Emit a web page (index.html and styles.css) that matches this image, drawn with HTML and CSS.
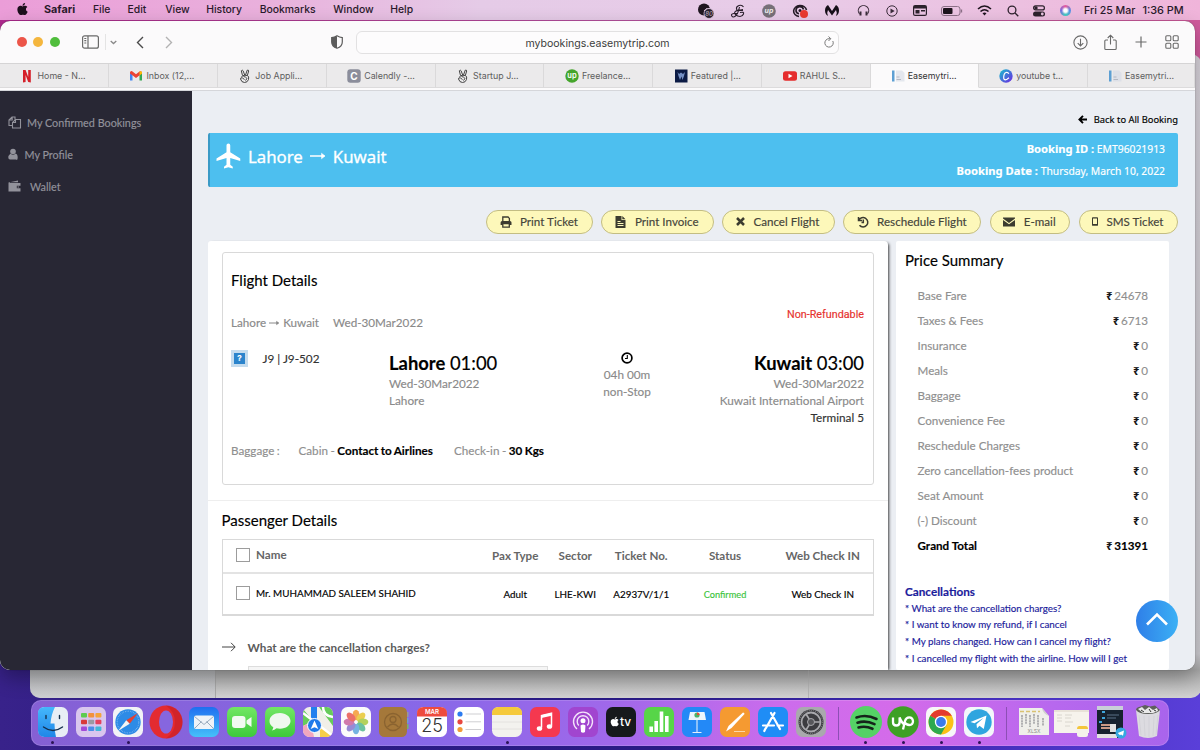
FILE: index.html
```
<!DOCTYPE html>
<html lang="en">
<head>
<meta charset="UTF-8" />
<meta name="viewport" content="width=device-width, initial-scale=1" />
<title>EaseMyTrip - My Bookings</title>
<link rel="stylesheet" href="styles.css">
</head>
<body>
<header class="menubar">
  <nav class="menus">
    <span><svg width="13" height="14" viewBox="0 0 384 512"><path fill="#1c0f1c" d="M318.7 268.7c-.2-36.7 16.4-64.4 50-84.8-18.8-26.9-47.2-41.7-84.7-44.6-35.5-2.8-74.3 20.7-88.5 20.7-15 0-49.4-19.7-76.4-19.7C63.3 141.2 4 184.8 4 273.5q0 39.3 14.4 81.2c12.8 36.7 59 126.7 107.2 125.2 25.2-.6 43-17.9 75.8-17.9 31.8 0 48.3 17.9 76.4 17.9 48.6-.7 90.4-82.5 102.6-119.3-65.2-30.7-61.7-90-61.7-91.9zm-56.6-164.2c27.3-32.4 24.8-61.9 24-72.5-24.1 1.4-52 16.4-67.9 34.9-17.5 19.8-27.8 44.3-25.6 71.9 26.1 2 49.9-11.4 69.5-34.3z"/></svg></span>
    <b>Safari</b>
    <span>File</span>
    <span>Edit</span>
    <span>View</span>
    <span>History</span>
    <span>Bookmarks</span>
    <span>Window</span>
    <span>Help</span>
  </nav>
  <div class="status">
    <i><svg width="18" height="16" viewBox="0 0 18 16"><circle cx="7" cy="6.500" r="6" fill="#1f1620"/><path d="M7 8q1-3 6-2.500" stroke="#e6cee8" fill="none"/><circle cx="12" cy="10.500" r="5" fill="#2a2230" stroke="#e6cee8" stroke-width=".8"/><text x="12" y="12.700" font-size="6" text-anchor="middle" fill="#b9a9bb">80</text></svg></i>
    <i><svg width="14" height="14" viewBox="0 0 14 14" fill="none" stroke="#2a1f2c" stroke-width="1.100"><path d="M12.500 3Q11 .5 8 1.500T5.500 5 8.500 6.500 12 5.500M12 6.500Q7.500 5.500 5 7t-.5 3.500T9 12.500t3.500-2.500T9 8.500M8.500 3Q7 10 4.500 12T.8 12t2-2.500H7"/></svg></i>
    <i><svg width="14" height="14" viewBox="0 0 14 14"><circle cx="7" cy="7" r="6.800" fill="#777078"/><text x="7" y="9" font-size="7" font-weight="700" text-anchor="middle" fill="#eee">up</text></svg></i>
    <i><svg width="18" height="16" viewBox="0 0 18 16"><path d="M15.500 7A6.500 5.500 0 1 0 8 13.500M12.500 6.500A3.800 3.600 0 1 0 8 10.800" fill="none" stroke="#241b26" stroke-width="1.600"/><circle cx="9" cy="7.500" r="1.500" fill="#241b26"/><circle cx="13" cy="11" r="4" fill="#ea3a30"/></svg></i>
    <i><svg width="16" height="13" viewBox="0 0 16 13"><path d="M4 12C0 10 0 3 4 1l4 6 4-6c4 2 4 9 0 11q1.500-3.500 0-6l-4 5.500L4 6q-1.500 2.500 0 6z" fill="#171019"/></svg></i>
    <i><svg width="13" height="13" viewBox="0 0 13 13" fill="none" stroke="#3a2c3a" stroke-width="1.100"><path d="M2.500 10A5.200 5.200 0 1 1 10.500 10"/><path d="M3.500 7.500v4M9.500 7.500v4" stroke-width="2"/></svg></i>
    <i><svg width="12" height="12" viewBox="0 0 12 12"><circle cx="6" cy="6" r="5.200" fill="none" stroke="#3a2c3a"/><path d="M4.500 3.500v5L8.700 6z" fill="#3a2c3a"/></svg></i>
    <i><svg width="14" height="11" viewBox="0 0 14 11"><rect x=".6" y=".6" width="12.800" height="9.800" rx="1.500" fill="none" stroke="#2c212c" stroke-width="1.200"/><path d="M1 1h12v2.500H1zM2.500 5h4v3.500h-4zM8 5h4v1.500H8z" fill="#2c212c"/></svg></i>
    <i><svg width="22" height="10" viewBox="0 0 22 10"><rect x=".5" y=".5" width="18.500" height="9" rx="2.500" fill="none" stroke="#8b6f87"/><rect x="2" y="2" width="9.500" height="6" rx="1" fill="#1e141e"/><path d="M20.500 3.500v3" stroke="#8b6f87" stroke-width="1.300"/></svg></i>
    <i><svg width="15" height="11" viewBox="0 0 15 11" fill="none" stroke="#1e141e" stroke-width="1.600"><path d="M1 4Q7.500-2 14 4M3.500 6.500q4-3.500 8 0"/><path d="M5.500 8.300q2-1.600 4 0L7.500 10.500z" fill="#1e141e" stroke="none"/></svg></i>
    <i><svg width="12" height="12" viewBox="0 0 12 12" fill="none" stroke="#2c212c" stroke-width="1.300"><circle cx="5" cy="5" r="3.900"/><path d="M8 8l3.300 3.300"/></svg></i>
    <i><svg width="12" height="12" viewBox="0 0 12 12"><rect x=".6" y=".9" width="10.800" height="4" rx="2" fill="none" stroke="#2c212c" stroke-width="1.200"/><circle cx="3" cy="2.900" r="1.700" fill="#2c212c"/><rect y="6.500" width="12" height="5" rx="2.500" fill="#2c212c"/><circle cx="9.300" cy="9" r="1.400" fill="#e9c5e2"/></svg></i>
    <i class="siri"></i>
    <span class="clock">Fri 25 Mar<em>1:36 PM</em></span>
  </div>
</header>

<div class="backwindow"><div class="backpane"></div></div>

<main class="window">
  <div class="toolbar">
    <span class="light red"></span><span class="light yellow"></span><span class="light green"></span>
    <svg class="t-side" width="17" height="14" viewBox="0 0 17 14" fill="none" stroke="#6a6a6a" stroke-width="1.200"><rect x=".6" y=".8" width="15.800" height="12.400" rx="2"/><path d="M6 1v12M2.300 3.500h2M2.300 5.700h2M2.300 8h2"/></svg>
    <span class="t-sep"></span>
    <svg class="t-chev" width="7" height="5" viewBox="0 0 7 5" fill="none" stroke="#8a8a8a" stroke-width="1.300"><path d="M.7 1l2.800 2.600L6.300 1"/></svg>
    <svg class="t-back" width="8" height="13" viewBox="0 0 8 13" fill="none" stroke="#4a4a4a" stroke-width="1.400"><path d="M7 1L1.500 6.500 7 12"/></svg>
    <svg class="t-fwd" width="8" height="13" viewBox="0 0 8 13" fill="none" stroke="#b2b2b2" stroke-width="1.400"><path d="M1 1l5.500 5.500L1 12"/></svg>
    <svg class="t-shield" width="12" height="14" viewBox="0 0 12 14"><path d="M6 .8Q8.500 2.300 11.300 2.600V7q0 4.500-5.300 6.200Q.7 11.500.7 7V2.600Q3.500 2.300 6 .8z" fill="none" stroke="#5c5c5c" stroke-width="1.200"/><path d="M6 1v12.200Q.7 11.500.7 7V2.600Q3.500 2.300 6 1z" fill="#5c5c5c"/></svg>
    <div class="url"><span>mybookings.easemytrip.com</span>
      <svg width="10" height="12" viewBox="0 0 10 12" fill="none" stroke="#7a7a7a"><path d="M8.800 5A4.200 4.200 0 1 1 5 2.700h1.500M4.500.5l2.300 2.200L4.500 5"/></svg>
    </div>
    <svg class="t-down" width="15" height="15" viewBox="0 0 15 15" fill="none" stroke="#6a6a6a" stroke-width="1.100"><circle cx="7.500" cy="7.500" r="6.600"/><path d="M7.500 3.800v7M4.700 8.200l2.800 2.800 2.800-2.800"/></svg>
    <svg class="t-share" width="13" height="17" viewBox="0 0 13 17" fill="none" stroke="#6a6a6a" stroke-width="1.100"><path d="M4 6H1.800q-1 0-1 1v7.500q0 1 1 1h9.400q1 0 1-1V7q0-1-1-1H9M6.500 10.500V1.200M3.700 4l2.800-2.800L9.300 4"/></svg>
    <svg class="t-plus" width="12" height="12" viewBox="0 0 12 12" stroke="#6a6a6a" stroke-width="1.200"><path d="M6 .5v11M.5 6h11"/></svg>
    <svg class="t-grid" width="14" height="14" viewBox="0 0 14 14" fill="none" stroke="#6a6a6a" stroke-width="1.100"><rect x=".8" y=".8" width="5" height="5" rx="1"/><rect x="8.200" y=".8" width="5" height="5" rx="1"/><rect x=".8" y="8.200" width="5" height="5" rx="1"/><rect x="8.200" y="8.200" width="5" height="5" rx="1"/></svg>
  </div>

  <div class="tabs">
    <div class="tab"><svg viewBox="0 0 14 14"><path d="M2 1h2.600l2.600 7V1h2.600v12.500L7.200 13 4.600 6v7L2 13.500z" fill="#d5202a"/></svg>Home - N...</div>
    <div class="tab"><svg viewBox="0 0 14 14"><path d="M1 11.500V3.500l2.500 2v6z" fill="#4285f4"/><path d="M10.500 11.500v-6l2.500-2v8z" fill="#34a853"/><path d="M1 3q1.500-1.500 2.500-.5L7 5.200l3.500-2.700Q12 2 13 3v1.500L7 9 1 4.500z" fill="#ea4335"/><path d="M10.500 2.500Q12 1.800 13 3v1.500l-2.500 2z" fill="#fbbc04"/></svg>Inbox (12,...</div>
    <div class="tab"><svg viewBox="0 0 14 14" fill="none" stroke="#444" stroke-width="1"><path d="M4.500 6.500L3.300 1.800q1.200-1.200 1.800 0L6.700 6M7.500 6L9.200 1.200q1.400-.5 1.500.8L9.300 6.500M3.500 7.500q2-2 6-1 1.800 1 1 4-1 3-4 3T2.500 10q0-2 2-1l2 1.500M5.500 7.500q2 0 3.500 2l-1.500 2"/></svg>Job Appli...</div>
    <div class="tab"><svg viewBox="0 0 14 14"><rect x=".3" y=".3" width="13.400" height="13.400" rx="3" fill="#8b8d9b"/><text x="7" y="10.600" font-size="10" font-weight="700" text-anchor="middle" fill="#fff">C</text></svg>Calendly -...</div>
    <div class="tab"><svg viewBox="0 0 14 14" fill="none" stroke="#444" stroke-width="1"><path d="M4.500 6.500L3.300 1.800q1.200-1.200 1.800 0L6.700 6M7.500 6L9.200 1.200q1.400-.5 1.500.8L9.300 6.500M3.500 7.500q2-2 6-1 1.800 1 1 4-1 3-4 3T2.500 10q0-2 2-1l2 1.500M5.500 7.500q2 0 3.500 2l-1.500 2"/></svg>Startup J...</div>
    <div class="tab"><svg viewBox="0 0 14 14"><circle cx="7" cy="7" r="6.700" fill="#45a52c"/><text x="7" y="9.300" font-size="7.500" font-weight="600" text-anchor="middle" fill="#fff">up</text></svg>Freelance...</div>
    <div class="tab"><svg viewBox="0 0 14 14"><path d="M1 .5h12.500v13H1z" fill="#0c1b45"/><path d="M3.500 3l1.500 2 2-1.500L9 5l2-2-1 4-1.500 4-1-3.500L6 11 4.500 7z" fill="#7590c4"/></svg>Featured |...</div>
    <div class="tab"><svg viewBox="0 0 14 14"><rect y="2.200" width="14" height="9.600" rx="2.500" fill="#e52d2d"/><path d="M5.500 4.800v4.400L9.500 7z" fill="#fff"/></svg>RAHUL S...</div>
    <div class="tab active"><svg viewBox="0 0 14 14"><path d="M1 1.500h2.500v11H1z" fill="#5d9fd3"/><path d="M5 1.500h6l2.500 2.500v8.500H5z" fill="#e4e7ee"/><path d="M5.500 8h3M5.500 10.500h4.500" stroke="#a9adb8" stroke-width=".8"/></svg>Easemytri...</div>
    <div class="tab"><svg viewBox="0 0 14 14"><defs><linearGradient id="canva" x1="0" y1="0" x2="1" y2="1"><stop offset="0" stop-color="#14c2cc"/><stop offset="1" stop-color="#7224e4"/></linearGradient></defs><circle cx="7" cy="7" r="6.700" fill="url(#canva)"/><path d="M9.800 4.800Q9 3 7 3.500T4.700 8 8 10.300l2-1.500" fill="none" stroke="#fff" stroke-width="1.200"/></svg>youtube t...</div>
    <div class="tab"><svg viewBox="0 0 14 14"><path d="M1 1.500h2.500v11H1z" fill="#5d9fd3"/><path d="M5 1.500h6l2.500 2.500v8.500H5z" fill="#dde0e8"/><path d="M5.500 8h3M5.500 10.500h4.500" stroke="#a9adb8" stroke-width=".8"/></svg>Easemytri...</div>
  </div>

  <div class="page">
    <aside class="sidebar">
      <a class="side-link"><svg width="13" height="13" viewBox="0 0 13 13" fill="none" stroke="#92929b" stroke-width="1.100"><path d="M7 3.500V1H4L1 4v5.500h3.500M4.200 1v3H1M7.500 3.500h5V12h-8V6.500zM7.500 3.500v3h-3"/></svg>My Confirmed Bookings</a>
      <a class="side-link profile"><svg width="10" height="12" viewBox="0 0 10 12" fill="#92929b"><circle cx="5" cy="3.500" r="2.800"/><path d="M2.500 5.500Q5 8 7.500 5.500 9.700 6 9.700 9.500T8 11.500H2Q.3 11.500.3 9.500T2.500 5.500z"/></svg>My Profile</a>
      <a class="side-link wallet"><svg width="13" height="12" viewBox="0 0 13 12" fill="#92929b"><path d="M.5 2.500L10 .5v1.800H2v.7h10.500v2.800H8.800v2.500h3.700v3.200H.5z"/><circle cx="10.200" cy="7" r=".7"/></svg>Wallet</a>
    </aside>

    <section class="content">
      <div class="back"><svg width="9" height="9" viewBox="0 0 9 9" fill="none" stroke="#000" stroke-width="1.900"><path d="M5 .8L1.400 4.500 5 8.200M1.500 4.500H9"/></svg>Back to All Booking</div>

      <div class="banner">
        <svg class="plane" width="30" height="30" viewBox="0 0 24 24" fill="#fff"><path d="M21 16v-2l-8-5V3.500c0-.83-.67-1.500-1.500-1.500S10 2.670 10 3.500V9l-8 5v2l8-2.500V19l-2 1.500V22l3.500-1 3.500 1v-1.500L13 19v-5.500l8 2.500z"/></svg>
        <span>Lahore</span>
        <svg class="arrow" width="16" height="10" viewBox="0 0 16 10" stroke="#fff" stroke-width="1.500" fill="none"><path d="M0 5h14.500"/><path d="M11.500 2.200L15 5l-3.500 2.800z" fill="#fff" stroke-width=".5"/></svg>
        <span>Kuwait</span>
        <div class="booking">
          <p><b>Booking ID :</b> EMT96021913</p>
          <p><b>Booking Date :</b> Thursday, March 10, 2022</p>
        </div>
      </div>

      <div class="actions">
        <button class="action w107"><svg width="12" height="12" viewBox="0 0 12 12" fill="none" stroke="#3c3c30" stroke-width="1.300"><path d="M2.800 5V1h5.200l1.400 1.400V5"/><path d="M.6 9V6.500Q.6 5 2.100 5H10q1.500 0 1.500 1.500V9H9.300V7.600H2.800V9z" fill="#3c3c30" stroke="none"/><path d="M2.800 7.700h6.500v3.400H2.800z"/></svg>Print Ticket</button>
        <button class="action w112"><svg width="11" height="12" viewBox="0 0 11 12"><path d="M.5 0h6v4h4v8H.5zM7.300 0l3.200 3.200H7.300z" fill="#3c3c30"/><path d="M2.500 5.500h3M2.500 7.500h6M2.500 9.500h6" stroke="#fdf8ba"/></svg>Print Invoice</button>
        <button class="action w112 cancel"><svg width="9" height="9" viewBox="0 0 9 9" stroke="#3c3c30" stroke-width="2.500"><path d="M1 1l7 7M8 1L1 8"/></svg>Cancel Flight</button>
        <button class="action w138"><svg width="12" height="12" viewBox="0 0 12 12" fill="none" stroke="#3c3c30" stroke-width="1.500"><path d="M1.500 1v3.500H5M1.800 4.300A4.700 4.700 0 1 1 2.500 9.300M6.300 3.500v3H4.500"/></svg>Reschedule Flight</button>
        <button class="action w80"><svg width="12" height="10" viewBox="0 0 12 10" fill="#3c3c30"><path d="M0 .5h12v1L6 6 0 1.500zM0 3l6 4.300L12 3v6.500H0z"/></svg>E-mail</button>
        <button class="action w99"><svg width="6" height="9" viewBox="0 0 7 10"><path d="M1 0h5q1 0 1 1v8q0 1-1 1H1Q0 10 0 9V1q0-1 1-1zM1.200 1.500v6.500h4.600V1.500z" fill="#3c3c30" fill-rule="evenodd"/></svg>SMS Ticket</button>
      </div>

      <div class="columns">
        <div class="details">
          <div class="flight">
            <h3>Flight Details</h3>
            <div class="route">
              <span class="cities">Lahore <svg width="11" height="8" viewBox="0 0 11 8" fill="none" stroke="#888"><path d="M0 4h9"/><path d="M7.500 2.300L10 4 7.500 5.700z" fill="#888" stroke-width=".5"/></svg> Kuwait</span>
              <span>Wed-30Mar2022</span>
              <span class="nonref">Non-Refundable</span>
            </div>
            <div class="leg">
              <div class="airline"><span class="noimg">?</span>J9 | J9-502</div>
              <div class="stop">
                <h4><b>Lahore</b> 01:00</h4>
                <p>Wed-30Mar2022</p>
                <p>Lahore</p>
              </div>
              <div class="duration">
                <svg width="12" height="12" viewBox="0 0 12 12" fill="none" stroke="#000" stroke-width="1.700"><circle cx="6" cy="6" r="4.900"/><path d="M6.300 3v3.500H4" stroke-width="1.100"/></svg>
                <p>04h 00m</p>
                <p>non-Stop</p>
              </div>
              <div class="stop right">
                <h4><b>Kuwait</b> 03:00</h4>
                <p>Wed-30Mar2022</p>
                <p>Kuwait International Airport</p>
                <p class="dark">Terminal 5</p>
              </div>
            </div>
            <div class="baggage"><span>Baggage :</span><span>Cabin - <b>Contact to Airlines</b></span><span>Check-in - <b>30 Kgs</b></span></div>
          </div>

          <div class="passengers">
            <h3>Passenger Details</h3>
            <div class="ptable">
              <div class="prow head"><span class="name"><i class="box"></i>Name</span><span>Pax Type</span><span>Sector</span><span>Ticket No.</span><span>Status</span><span>Web Check IN</span></div>
              <div class="prow"><span class="name"><i class="box"></i>Mr. MUHAMMAD SALEEM SHAHID</span><span>Adult</span><span>LHE-KWI</span><span>A2937V/1/1</span><span class="ok">Confirmed</span><span>Web Check IN</span></div>
            </div>
            <div class="question"><svg width="14" height="10" viewBox="0 0 14 10" fill="none" stroke="#444"><path d="M0 5h13M9 .8L13.200 5 9 9.200"/></svg>What are the cancellation charges?</div>
            <div class="answer"></div>
          </div>
        </div>

        <div class="price">
          <h3>Price Summary</h3>
          <ul class="fares">
            <li>Base Fare<span><i>₹</i>24678</span></li>
            <li>Taxes &amp; Fees<span><i>₹</i>6713</span></li>
            <li>Insurance<span><i>₹</i>0</span></li>
            <li>Meals<span><i>₹</i>0</span></li>
            <li>Baggage<span><i>₹</i>0</span></li>
            <li>Convenience Fee<span><i>₹</i>0</span></li>
            <li>Reschedule Charges<span><i>₹</i>0</span></li>
            <li>Zero cancellation-fees product<span><i>₹</i>0</span></li>
            <li>Seat Amount<span><i>₹</i>0</span></li>
            <li>(-) Discount<span><i>₹</i>0</span></li>
            <li class="total">Grand Total<span><i>₹</i>31391</span></li>
          </ul>
          <h5>Cancellations</h5>
          <p>* What are the cancellation charges?</p>
          <p>* I want to know my refund, if I cancel</p>
          <p>* My plans changed. How can I cancel my flight?</p>
          <p>* I cancelled my flight with the airline. How will I get</p>
        </div>
      </div>
    </section>
  </div>
  <div class="totop"><svg width="22" height="14" viewBox="0 0 22 14" fill="none" stroke="#fff" stroke-width="2.600"><path d="M1 12.500L11 2.500l10 10"/></svg></div>
</main>

<footer class="dock">
  <div class="app run"><svg viewBox="0 0 30 30"><defs><linearGradient id="finder" x2="0" y2="1"><stop stop-color="#45b8fb"/><stop offset="1" stop-color="#1f86e8"/></linearGradient></defs><rect width="30" height="30" rx="6.500" fill="#e8eef5"/><path d="M6.500 0H17q-4 8-4.500 16.500h4Q16.500 24 18 30H6.500Q0 30 0 23.500v-17Q0 0 6.500 0z" fill="url(#finder)"/><path d="M8 8.500v3M21.500 8.500v3M5.500 20q9.500 7 19 0" fill="none" stroke="#15304d" stroke-width="1.400" stroke-linecap="round"/></svg></div>
  <div class="app"><svg viewBox="0 0 30 30"><rect width="30" height="30" rx="6.500" fill="#d9c6ee"/><g><rect x="5" y="6" width="6" height="4.500" rx="1" fill="#5ecb50"/><rect x="12.200" y="6" width="6" height="4.500" rx="1" fill="#f2913c"/><rect x="19.400" y="6" width="6" height="4.500" rx="1" fill="#f4a43a"/><rect x="5" y="12.800" width="6" height="4.500" rx="1" fill="#d83a3a"/><rect x="12.200" y="12.800" width="6" height="4.500" rx="1" fill="#9a9aa4"/><rect x="19.400" y="12.800" width="6" height="4.500" rx="1" fill="#e4425e"/><rect x="5" y="19.600" width="6" height="4.500" rx="1" fill="#a24bd8"/><rect x="12.200" y="19.600" width="6" height="4.500" rx="1" fill="#4b8fe8"/><rect x="19.400" y="19.600" width="6" height="4.500" rx="1" fill="#42b8d8"/></g></svg></div>
  <div class="app run"><svg viewBox="0 0 30 30"><rect width="30" height="30" rx="6.500" fill="#f2f3f6"/><circle cx="15" cy="15" r="12.700" fill="#2d8be6"/><circle cx="15" cy="15" r="10.800" fill="none" stroke="#9cc8f3" stroke-width="1.200" stroke-dasharray=".5 1.200"/><path d="M25 6L13.300 13.300l3.400 3.400z" fill="#e8412f"/><path d="M5 24l8.300-10.700 3.400 3.400z" fill="#f4f4f4"/></svg></div>
  <div class="app big"><svg viewBox="0 0 34 34"><ellipse cx="17" cy="17" rx="16.500" ry="16.500" fill="#e32b31"/><path d="M17 .5Q33 3 33.500 17T17 33.500Q26 27 26 17T17 .5z" fill="#b71a22" opacity=".4"/><ellipse cx="17" cy="17" rx="7" ry="11.500" fill="#8666df"/></svg></div>
  <div class="app"><svg viewBox="0 0 30 30"><defs><linearGradient id="mail" x2="0" y2="1"><stop stop-color="#1f6ff0"/><stop offset="1" stop-color="#45c0fa"/></linearGradient></defs><rect width="30" height="30" rx="6.500" fill="url(#mail)"/><rect x="5" y="8.500" width="20" height="13.500" rx="2" fill="#eef3f8"/><path d="M5.500 9.500l9.500 8 9.500-8M5.500 21.500l7-7M24.500 21.500l-7-7" fill="none" stroke="#8ea2b5" stroke-width=".9"/></svg></div>
  <div class="app"><svg viewBox="0 0 30 30"><defs><linearGradient id="green" x2="0" y2="1"><stop stop-color="#72e764"/><stop offset="1" stop-color="#3dc93a"/></linearGradient></defs><rect width="30" height="30" rx="6.500" fill="url(#green)"/><rect x="5" y="9" width="13.500" height="12" rx="3" fill="#f2faf1"/><path d="M19.500 13.500l5-3.500v10l-5-3.500z" fill="#f2faf1"/></svg></div>
  <div class="app"><svg viewBox="0 0 30 30"><rect width="30" height="30" rx="6.500" fill="url(#green)"/><path d="M15 6C9 6 4.500 9.500 4.500 14q0 4 3.800 6.200-.3 2.300-1.500 3.300 2.700-.3 4.700-2.200 1.700.4 3.500.4c6 0 10.500-3.400 10.500-7.700S21 6 15 6z" fill="#eff8ee"/></svg></div>
  <div class="app"><svg viewBox="0 0 30 30"><defs><clipPath id="r"><rect width="30" height="30" rx="6.500"/></clipPath></defs><g clip-path="url(#r)"><path d="M0 0h30v30H0z" fill="#f1efe8"/><path d="M0 2l10 12-10 5zM16 0h14v19z" fill="#67cb5b"/><path d="M0 19l8-4 3 15H0z" fill="#f2a7bf"/><path d="M17 19l13 11H17z" fill="#f6cf4a"/><path d="M8 0h6v14H8z" fill="#2280ee"/><path d="M20 0q0 9 10 10M0 6l30 23" fill="none" stroke="#fff" stroke-width="2.500"/><circle cx="11.500" cy="18.500" r="7" fill="#1f7bea" stroke="#fff"/><path d="M11.500 13.500l3.800 8.500-3.800-1.800L7.700 22z" fill="#fff"/></g></svg></div>
  <div class="app"><svg viewBox="0 0 30 30"><rect width="30" height="30" rx="6.500" fill="#fbfbfb"/><g opacity=".82"><ellipse cx="15" cy="8" rx="3.400" ry="5.300" fill="#f5982b"/><ellipse cx="15" cy="8" rx="3.400" ry="5.300" fill="#e8c52a" transform="rotate(45 15 15)"/><ellipse cx="15" cy="8" rx="3.400" ry="5.300" fill="#a3c93a" transform="rotate(90 15 15)"/><ellipse cx="15" cy="8" rx="3.400" ry="5.300" fill="#4bb58b" transform="rotate(135 15 15)"/><ellipse cx="15" cy="8" rx="3.400" ry="5.300" fill="#5aa4dc" transform="rotate(180 15 15)"/><ellipse cx="15" cy="8" rx="3.400" ry="5.300" fill="#8373cf" transform="rotate(225 15 15)"/><ellipse cx="15" cy="8" rx="3.400" ry="5.300" fill="#c75f9c" transform="rotate(270 15 15)"/><ellipse cx="15" cy="8" rx="3.400" ry="5.300" fill="#e8524a" transform="rotate(315 15 15)"/></g></svg></div>
  <div class="app"><svg viewBox="0 0 30 30"><path d="M27 5h2.500v5H27z" fill="#999"/><path d="M27 11h2.500v5H27z" fill="#6f9fd0"/><path d="M27 17h2.500v5H27z" fill="#79b26a"/><rect width="28" height="30" rx="5.500" fill="#a5783a"/><circle cx="14" cy="15" r="8.500" fill="none" stroke="#8a6330" stroke-width="1.300"/><circle cx="14" cy="12.500" r="3" fill="none" stroke="#8a6330" stroke-width="1.300"/><path d="M8.500 20q5.500-6 11 0" fill="none" stroke="#8a6330" stroke-width="1.300"/></svg></div>
  <div class="app"><svg viewBox="0 0 30 30"><rect width="30" height="30" rx="6.500" fill="#fff"/><path d="M6.500 0h17Q30 0 30 6.500V9.500H0v-3Q0 0 6.500 0z" fill="#ee4b3e"/><text x="15" y="7.300" font-size="6.200" font-weight="600" text-anchor="middle" fill="#fff">MAR</text><text x="15" y="25.300" font-size="18" text-anchor="middle" fill="#333" font-weight="300">25</text></svg></div>
  <div class="app"><svg viewBox="0 0 30 30"><rect width="30" height="30" rx="6.500" fill="#fff"/><circle cx="6" cy="7" r="2.600" fill="#2b7bf0"/><circle cx="6" cy="14.800" r="2.600" fill="#e8473f"/><circle cx="6" cy="22.500" r="2.600" fill="#f29a37"/><path d="M11.500 7H27M11.500 14.800H27M11.500 22.500H27" stroke="#cfcfd2"/></svg></div>
  <div class="app run"><svg viewBox="0 0 30 30"><rect width="30" height="30" rx="6.500" fill="#f3f2ee"/><path d="M6.500 0h17Q30 0 30 6.500V8H0V6.500Q0 0 6.500 0z" fill="#f5c93b"/><path d="M0 15h30M0 22h30" stroke="#dfdeda" stroke-width=".8"/></svg></div>
  <div class="app"><svg viewBox="0 0 30 30"><rect width="30" height="30" rx="6.500" fill="#f5384f"/><path d="M11.500 20.500V8.500l10-2.300v12.600" fill="none" stroke="#fff" stroke-width="1.500"/><path d="M11.500 8.300l10-2.300v2.700l-10 2.300z" fill="#fff"/><ellipse cx="9.500" cy="21.500" rx="2.700" ry="2.300" fill="#fff"/><ellipse cx="19.500" cy="19.500" rx="2.700" ry="2.300" fill="#fff"/></svg></div>
  <div class="app"><svg viewBox="0 0 30 30"><rect width="30" height="30" rx="6.500" fill="#a145cf"/><g fill="none" stroke="#f3e3fa" stroke-width="1.400"><path d="M9 22a9.500 9.500 0 1 1 12 0"/><path d="M10.800 18.500a5.800 5.800 0 1 1 8.400 0"/></g><circle cx="15" cy="13.800" r="2.500" fill="#fff"/><path d="M12.500 18.500q2.500-2 5 0L17 25q-2 1.500-4 0z" fill="#fff"/></svg></div>
  <div class="app"><svg viewBox="0 0 30 30"><rect width="30" height="30" rx="6.500" fill="#16191c"/><svg x="4" y="9" width="9.500" height="11" viewBox="0 0 384 512"><path fill="#fff" d="M318.700 268.700c-.2-36.700 16.400-64.400 50-84.800-18.800-26.900-47.200-41.700-84.700-44.600-35.500-2.800-74.300 20.700-88.500 20.700-15 0-49.400-19.700-76.400-19.700C63.300 141.200 4 184.800 4 273.500q0 39.300 14.400 81.200c12.800 36.700 59 126.700 107.200 125.200 25.200-.6 43-17.900 75.800-17.900 31.800 0 48.300 17.900 76.400 17.900 48.600-.7 90.400-82.500 102.600-119.300-65.200-30.700-61.700-90-61.700-91.900zm-56.600-164.200c27.300-32.400 24.800-61.900 24-72.500-24.100 1.400-52 16.400-67.900 34.900-17.500 19.800-27.800 44.300-25.600 71.900 26.100 2 49.900-11.400 69.500-34.300z"/></svg><text x="19.500" y="19" font-size="12" font-weight="500" text-anchor="middle" fill="#fff">tv</text></svg></div>
  <div class="app"><svg viewBox="0 0 30 30"><rect width="30" height="30" rx="6.500" fill="#57d548"/><path d="M7.200 25V19.500M12.200 25V14M17.500 25V4.500M22.800 25V9" stroke="#fff" stroke-width="3.600"/></svg></div>
  <div class="app"><svg viewBox="0 0 30 30"><rect width="30" height="30" rx="6.500" fill="#2389f7"/><path d="M8 5h14.500l1.500 8H6.500z" fill="#eef5fc"/><circle cx="15" cy="8" r="2.600" fill="#4cb26a"/><path d="M15 8V5.400A2.600 2.600 0 0 1 17.600 8z" fill="#e94a38"/><path d="M15 13v12M10.500 25.500h9" stroke="#e2effc" stroke-width="1.100"/></svg></div>
  <div class="app"><svg viewBox="0 0 30 30"><rect width="30" height="30" rx="6.500" fill="#f59a31"/><path d="M23 5.500q1.500 0 1.500 1.500L11.500 21 6 24.500 8.500 19z" fill="#fff"/><path d="M14 24.500h11" stroke="#fbd7a5"/></svg></div>
  <div class="app"><svg viewBox="0 0 30 30"><rect width="30" height="30" rx="6.500" fill="#1f8df6"/><path d="M16.500 6L8 21M13 6l9 16M5 18.500h11M19.500 18.500H25M7.500 21.500L6.300 24" fill="none" stroke="#fff" stroke-width="2.200" stroke-linecap="round"/></svg></div>
  <div class="app"><svg viewBox="0 0 30 30"><rect width="30" height="30" rx="6.500" fill="#a9a9ad"/><circle cx="15" cy="15" r="12.500" fill="#3c3c40"/><circle cx="15" cy="15" r="9.500" fill="none" stroke="#a9a9ad" stroke-width="1.800"/><circle cx="15" cy="15" r="11.500" fill="none" stroke="#8d8d91" stroke-dasharray="1 1"/><path d="M15 15h9M15 15l-5-8M15 15l-5 8" stroke="#a9a9ad" stroke-width="1.600"/><circle cx="15" cy="15" r="3.500" fill="#57575b" stroke="#a9a9ad"/></svg></div>
  <div class="divider"></div>
  <div class="app run mid"><svg viewBox="0 0 32 32"><circle cx="16" cy="16" r="16" fill="#55d266"/><path d="M6.500 11.500q10-3.500 20 1.500M7.500 16.700q8.500-2.700 17 1.500M8.500 21.500q7-2 14 1.300" fill="none" stroke="#15241a" stroke-width="2.600" stroke-linecap="round"/></svg></div>
  <div class="app run mid"><svg viewBox="0 0 32 32"><circle cx="16" cy="16" r="15.700" fill="#3ea024"/><path d="M6 11.500v4.700q0 3.300 3.300 3.300t3.300-3.300v-4.700q2 5.500 5.500 7.500M16 23.500l2-8.500q1-3.700 4.300-3.700t3.700 3.700q0 4-3.700 4-3 0-5.500-3.500" fill="none" stroke="#fff" stroke-width="2.300"/></svg></div>
  <div class="app run"><svg viewBox="0 0 30 30"><rect width="30" height="30" rx="6.500" fill="#f7f7f8"/><circle cx="15" cy="15" r="12.500" fill="#fbc116"/><path d="M15 15L4.200 8.800A12.500 12.500 0 0 1 25.800 8.800H15z" fill="#e33b2e"/><path d="M4.200 8.800A12.500 12.500 0 0 0 15 27.500L20.400 18 15 15z" fill="#2da94f"/><circle cx="15" cy="15" r="6.200" fill="#fff"/><circle cx="15" cy="15" r="4.900" fill="#3a7bea"/></svg></div>
  <div class="app run"><svg viewBox="0 0 30 30"><rect width="30" height="30" rx="6.500" fill="#f3f7fa"/><circle cx="15" cy="15" r="12.700" fill="#2fa5df"/><path d="M6.500 15L22.500 8.500l-2.700 13.500-4.300-3.200-2.500 2.400-.5-4 7-6.200-9 5.200z" fill="#fff"/></svg></div>
  <div class="divider"></div>
  <div class="app"><svg viewBox="0 0 30 30"><path d="M0 1h23l7 8v19H0z" fill="#efefea"/><path d="M23 1q1 6 7 8z" fill="#cfcfcf"/><path d="M1 4.500h20" stroke="#d9c272" stroke-width="1.500" stroke-dasharray="4 2"/><path d="M3 8v12M7 7v10M11 8v12M15 7v10M19 8v12M24 11v8" stroke="#aaaaac" stroke-width="1.800" stroke-dasharray="2 .6"/><text x="15" y="26" font-size="5" text-anchor="middle" fill="#888">XLSX</text></svg></div>
  <div class="app wide"><svg viewBox="0 0 36 30"><path d="M0 3h35v23H0z" fill="#f6f3ec"/><path d="M0 3h35v2H0z" fill="#e8e2d8"/><path d="M3 8h5M3 11h5M3 14h5M11 8h7M11 11h6M11 15h8M11 19h5" stroke="#d3cec8" stroke-width=".8"/><rect x="23" y="19" width="11" height="11" rx="2.500" fill="#f4f2ea"/><path d="M25.500 19h6q2.500 0 2.500 3H23q0-3 2.500-3z" fill="#f4c63b"/></svg></div>
  <div class="app big"><svg viewBox="0 0 34 34"><path d="M4 1h26v32H4z" fill="#16222f"/><path d="M4 1h26v4H4z" fill="#c9cfd8"/><path d="M9 7h3M9 13h3M6 17h3" stroke="#3fa7de" stroke-width="2"/><path d="M14 10h12M14 13h9" stroke="#5b7187"/><path d="M4 29h20v4H4zM17 19h6v8h-6z" fill="#e2e2e2"/><path d="M8 20h9M8 23h9" stroke="#c99a86" stroke-width="2"/><circle cx="28" cy="28" r="5.500" fill="#35a8e0"/><path d="M24.800 28l6.200-2.500-1 5.200-2-1.300-1 .8z" fill="#fff"/></svg></div>
  <div class="app big"><svg viewBox="0 0 34 34"><path d="M5 5l3 26q9 4 18 0l3-26z" fill="#dcdbe0"/><path d="M8 10l2 20M13 11l1 20M18 11v21M23 11l-1 20M27 10l-2 20" stroke="#cfced4" stroke-width=".7"/><path d="M5 5q0-3 5-3.500L14 0l5 1.500 5-1 5 4.500q-3 4-12 4T5 5z" fill="#5e605c"/><path d="M7 4l4-2 3 3 4-3 4 3 4-2 1 3-5 2H12z" fill="#e9e9e9"/><path d="M10 5l3 2M18 4l2 3M23 5l2 1" stroke="#333"/></svg></div>
</footer>
</body>
</html>
```

FILE: styles.css
```
* { box-sizing: border-box; }
body {
  margin: 0;
  width: 1200px;
  height: 750px;
  overflow: hidden;
  position: relative;
  font-family: 'Lato', sans-serif;
  background:
    linear-gradient(90deg, #b02a90, #c05aa8 60%, #d05a9c) 0 0 / 100% 200px no-repeat,
    linear-gradient(90deg, #38228a 0%, #2b1c86 20%, #2a1b85 55%, #3c28b0 75%, #5a3fd9 100%);
}
h3, h4, h5, p, ul { margin: 0; padding: 0; font-weight: 400; }
svg { display: block; flex-shrink: 0; overflow: visible; }
svg text { font-family: 'Inter', sans-serif; }

/* menu bar */
.menubar {
  height: 20px;
  display: flex;
  justify-content: space-between;
  background: linear-gradient(90deg, #eb9dd8 0%, #e9b0dc 22%, #e5cbe7 40%, #e8cce8 65%, #ecc0e0 85%, #f0b4da 100%);
  font: 500 10.400px/20px 'Inter', sans-serif;
  color: #2a1a2b;
}
.menus {
  display: grid;
  grid-template-columns: 28.500px 49px 34.500px 37.700px 41px 53.500px 73.500px 57px 40px;
  padding-left: 15.500px;
}
.menus span, .menus b { white-space: nowrap; }
.menus svg { margin-top: 2px; }
.menus b { font-size: 10.800px; }
.status {
  display: grid;
  grid-template-columns: 30px 33px 29px 33px 32px 30px 27px 29px 36px 29px 27px 26px 26px 122px;
}
.status i { display: flex; align-items: center; justify-content: center; }
.siri::before {
  content: "";
  width: 11px; height: 11px;
  border-radius: 50%;
  background: radial-gradient(circle, #fff 0 22%, transparent 50%), conic-gradient(#e85a9c, #5a8ee8, #45cfc0, #7a6ee0, #e85a9c);
}
.clock { padding-left: 6px; white-space: nowrap; font-size: 10.600px; }
.clock em { font-style: normal; margin-left: 7px; font-size: 10.900px; }

/* window left open behind the browser */
.backwindow {
  position: absolute;
  left: 30px; top: 54px;
  width: 1171px; height: 644px;
  border-radius: 10px;
  background: linear-gradient(#d9d4dc 0, #cfced3 600px, #a9a9a9 616px, #d2d2d2 100%);
}
.backpane {
  width: 779px; height: 100%;
  border-right: 1px solid #b5b5b5;
  background: linear-gradient(90deg, rgba(200, 203, 210, .4) 185px, #a8a8a8 185px 186px, transparent 186px);
  border-radius: 10px 0 0 10px;
}

/* browser */
.window {
  position: absolute;
  left: 0; top: 21px;
  width: 1195px; height: 649px;
  border-radius: 10px;
  overflow: hidden;
  background: #fbfafb;
  box-shadow: 0 0 1px rgba(0, 0, 0, .6), 0 8px 20px rgba(0, 0, 0, .3);
}
.toolbar {
  height: 43px;
  padding-left: 16.500px;
  display: flex;
  align-items: center;
  border-bottom: 1px solid #d5d4d5;
}
.light { width: 10px; height: 10px; border-radius: 50%; margin-right: 6.500px; }
.red { background: #ec5549; }
.yellow { background: #f4b63e; }
.green { background: #50bd3c; }
.t-side { margin-left: 15.500px; }
.t-sep { width: 1px; height: 16px; margin-left: 6px; background: #e4e4e4; }
.t-chev { margin-left: 4.500px; }
.t-back { margin-left: 19px; }
.t-fwd { margin-left: 21px; }
.t-shield { margin-left: 157.500px; }
.url {
  width: 483px; height: 23px;
  margin-left: 13px;
  padding: 0 4px 0 0;
  border: 1px solid #e2e1e2;
  border-radius: 6px;
  display: flex;
  align-items: center;
  background: #fdfcfd;
  font: 10.550px 'Inter', sans-serif;
  color: #3c3c3c;
}
.url span { flex: 1; text-align: center; padding: 2px 0 0 15px; }
.t-down { margin-left: 234px; }
.t-share { margin-left: 16.500px; }
.t-plus { margin-left: 18px; }
.t-grid { margin-left: 17.500px; }

.tabs {
  display: flex;
  height: 26px;
  background: #ebeaeb;
  border-bottom: 2px solid #fcfbfc;
}
.tab {
  width: 108.900px;
  display: flex;
  align-items: center;
  gap: 3px;
  padding-left: 20.500px;
  border-right: 1px solid #dad9da;
  border-bottom: 1px solid #dcdbdc;
  font: 8.850px 'Inter', sans-serif;
  color: #5e5e5e;
  white-space: nowrap;
}
.tab svg { width: 14px; height: 14px; }
.tab.active { width: 107.500px; padding-left: 19.500px; background: #fbfafb; color: #333; border-bottom-color: #fbfafb; }
.tab:last-child { flex: 1; }

/* page */
.page {
  display: flex;
  height: 580px;
  background: #ebeef3;
  border-top: 1px solid #d5d6da;
  -webkit-text-stroke: .15px;
}
.sidebar { width: 191.500px; background: #282734; padding-top: 15px; }
.side-link {
  height: 32px;
  display: flex;
  align-items: center;
  gap: 6px;
  padding-left: 8px;
  font-size: 10.800px;
  color: #92929b;
}
.side-link.wallet { gap: 9px; }
.profile { gap: 6.500px; }
.content { flex: 1; padding: 0 17px 0 16.500px; }
.back {
  display: flex;
  justify-content: flex-end;
  align-items: center;
  gap: 6.500px;
  height: 42px;
  padding-top: 15px;
  font: 9.360px 'Noto Sans', sans-serif;
  color: #000;
}
.banner {
  height: 54px;
  padding: 0 13px 8px 4px;
  display: flex;
  align-items: center;
  border-left: 2px solid #3a9ac6;
  border-radius: 2px;
  background: #4dbfef;
  color: #fff;
  font: 16.800px 'Noto Sans', sans-serif;
  -webkit-text-stroke: .3px;
}
.banner .plane { margin-right: 4px; }
.banner .arrow { margin: 0 7px; }
.booking { margin-left: auto; text-align: right; font-size: 10.330px; line-height: 21px; padding-top: 8px; -webkit-text-stroke: .15px; }
.booking b { font-size: 11.200px; }

.actions {
  display: flex;
  justify-content: flex-end;
  gap: 8.300px;
  margin-top: 23px;
}
.action {
  height: 24px;
  padding: 0 1px 1px 0;
  display: flex;
  align-items: center;
  justify-content: center;
  gap: 8.500px;
  border: 1px solid #c3bd83;
  border-radius: 12px;
  background: #fdf8ba;
  font: 11.620px 'Lato', sans-serif;
  color: #45453a;
  -webkit-text-stroke: .15px;
}
.cancel { gap: 8px; }
.w80 { width: 80.500px; }
.w99 { width: 99.500px; }
.w107 { width: 107.500px; }
.w112 { width: 112.500px; }
.w138 { width: 138.500px; }

.columns { display: flex; gap: 8px; margin-top: 7px; height: 429px; }
.details {
  width: 680px;
  background: #fff;
  border-radius: 3px 4px 0 0;
  box-shadow: 2px 1px 3px -1px rgba(0, 0, 0, .75);
}
.details h3, .price h3 { font-size: 15px; line-height: 20px; color: #000; }
.flight {
  height: 233px;
  margin: 11px 14.500px 0 13.500px;
  padding: 17px 8.500px 0;
  border: 1px solid #d9d9d9;
  border-radius: 3px;
}
.route {
  display: flex;
  margin-top: 16px;
  height: 26px;
  font-size: 11.700px;
  line-height: 17px;
  color: #8a8a8a;
}
.route span { padding-top: 8px; }
.route .cities { display: flex; align-items: center; gap: 3px; margin-right: 14px; padding-top: 7px; }
.route .nonref { margin-left: auto; padding-top: 0; color: #e6322e; font: 10.780px/17px 'Roboto', sans-serif; }
.leg {
  display: grid;
  grid-template-columns: 158px 160px 156px 1fr;
  margin-top: 17px;
  height: 78px;
  font-size: 11.750px;
  line-height: 17px;
  color: #8a8a8a;
}
.airline { display: flex; align-items: center; gap: 14.500px; height: 19px; color: #333; }
.noimg {
  width: 17px; height: 17px;
  border: 3px solid #c5dcee;
  background: #2b84cc;
  color: #fff;
  font: 700 8px/11px 'Inter', sans-serif;
  text-align: center;
}
.stop h4 { margin-top: 5px; font-size: 18.400px; line-height: 19px; height: 21px; color: #000; white-space: nowrap; }
.right { text-align: right; }
.dark { color: #333; }
.duration { text-align: center; padding-top: 3px; }
.duration svg { margin: 0 auto 2px; }
.baggage { display: flex; margin-top: 14px; font-size: 11.700px; line-height: 18px; color: #8f8f8f; white-space: nowrap; }
.baggage span { word-spacing: -.5px; }
.baggage span:first-child { width: 67.500px; }
.baggage span:nth-child(2) { width: 155.500px; }
.baggage b, .total { color: #000; }

.passengers { margin-top: 15px; padding: 9px 14.500px 0 13.500px; border-top: 1px solid #eee; }
.ptable { margin-top: 9px; border: 1px solid #d9d9d9; border-bottom-width: 2px; }
.prow {
  display: grid;
  grid-template-columns: 263px 59.500px 60.500px 71.500px 96px 1fr;
  height: 40px;
  align-items: center;
  text-align: center;
  font-size: 9.850px;
  color: #000;
}
.prow.head { height: 34px; padding-bottom: 1px; border-bottom: 2px solid #e3e3e3; font-size: 11.600px; font-weight: 700; color: #666; -webkit-text-stroke: 0; }
.name { display: flex; align-items: center; gap: 6px; padding: 0 0 2px 13.500px; }
.box { width: 14px; height: 14px; border: 1.500px solid #9c9c9c; background: #fff; }
.ok { color: #3cc43c; font-size: 9.240px; }
.question { display: flex; align-items: center; gap: 12px; height: 20px; margin-top: 21px; font-size: 11.750px; font-weight: 700; color: #5b5b5b; -webkit-text-stroke: 0; }
.answer { width: 300px; height: 20px; margin: 9px 0 0 26.500px; border: 1px solid #ddd; background: #f5f5f5; }

.price { width: 273px; background: #fff; padding: 9px 9.500px 0 9px; border-radius: 2px; }
.fares { list-style: none; padding: 12.500px 11.500px 25px 12.500px; }
.fares li { display: flex; justify-content: space-between; font-size: 11.650px; line-height: 25px; color: #8f8f8f; }
.fares i { font: 700 10.500px 'Noto Sans', sans-serif; line-height: 1; color: #111; margin-right: 2px; }
.fares .total { font-weight: 700; color: #000; }
.price h5 { font-size: 11.750px; line-height: 17px; font-weight: 700; color: #1c1c9c; }
.price p { font-size: 9.800px; line-height: 16.700px; color: #1c1c9c; white-space: nowrap; }

.totop {
  position: absolute;
  left: 1136px; top: 579px;
  width: 42px; height: 42px;
  border-radius: 50%;
  display: flex;
  align-items: center;
  justify-content: center;
  padding-bottom: 4px;
  background: linear-gradient(90deg, #2f7fe8, #3bb0f5);
}

/* dock */
.dock {
  position: absolute;
  left: 31px; top: 700px;
  width: 1138px; height: 46px;
  padding: 7px 0 0 2.750px;
  display: flex;
  border-radius: 10px;
  background: linear-gradient(90deg, #8560d4 0%, #8868e8 35%, #a268ea 52%, #cc6cec 66%, #d46bea 76%, #b768ee 90%, #a964ec 100%);
  box-shadow: inset 0 0 0 1px rgba(255, 255, 255, .15);
}
.app { width: 37.900px; display: flex; flex-direction: column; align-items: center; position: relative; }
.app > svg { width: 30px; height: 30px; }
.app.mid > svg { width: 32px; height: 32px; margin-top: -1px; }
.app.big > svg { width: 34px; height: 34px; margin-top: -2px; }
.app.wide > svg { width: 36px; }
.run::after {
  content: "";
  position: absolute;
  top: 34px;
  width: 3px; height: 3px;
  border-radius: 50%;
  background: #2a1455;
}
.divider { width: 17.200px; background: linear-gradient(#8d4fb5, #8d4fb5) center 0 / 1px 33px no-repeat; }
```
